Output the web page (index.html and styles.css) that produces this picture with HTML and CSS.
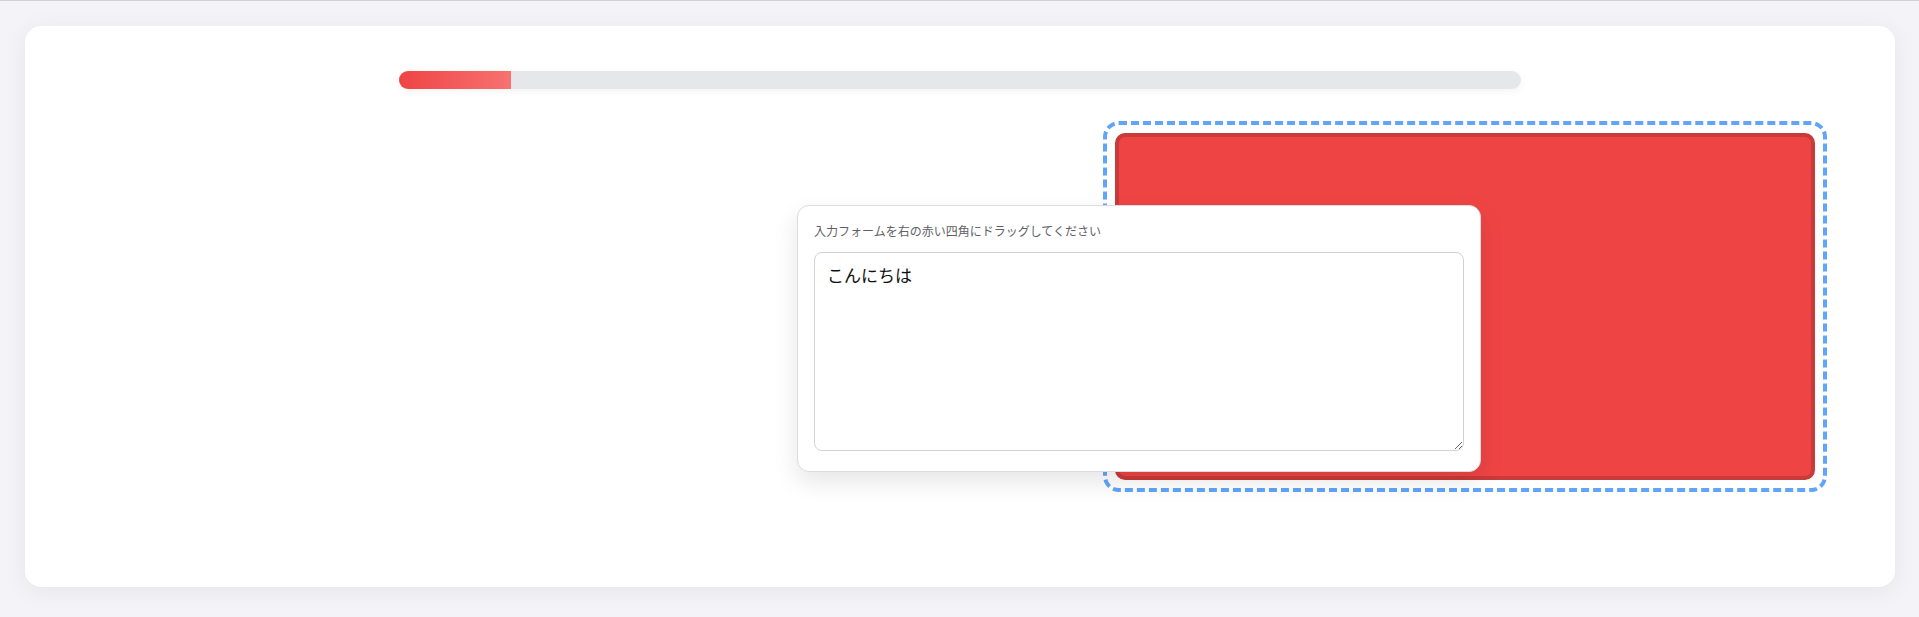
FILE: index.html
```html
<!DOCTYPE html>
<html lang="ja">
<head>
<meta charset="utf-8">
<title>Drag</title>
<link rel="stylesheet" href="styles.css">
</head>
<body>
<div class="card">
  <div class="progress"><div class="progress-fill" style="width:10%"></div></div>
  <div class="stage">
    <div class="dropzone"><div class="target"></div></div>
  </div>
  <div class="panel">
    <div class="panel-label">入力フォームを右の赤い四角にドラッグしてください</div>
    <textarea class="panel-input">こんにちは</textarea>
  </div>
</div>
</body>
</html>
```
FILE: styles.css
```css
html, body {
  margin: 0;
  padding: 0;
}
body {
  background: #f4f4f8;
  border-top: 1px solid #cfcfd4;
  padding: 25px 24px 30px 25px;
  font-family: "Noto Sans CJK JP", "Noto Sans", sans-serif;
  box-sizing: border-box;
  height: 617px;
  overflow: hidden;
}
.card {
  position: relative;
  background: #ffffff;
  border-radius: 16px;
  height: 561px;
  box-sizing: border-box;
  padding: 45px 0 0 0;
  box-shadow: 0 4px 22px rgba(40, 40, 80, 0.08);
}
.progress {
  width: 60%;
  height: 18px;
  margin: 0 auto;
  background: #e5e7eb;
  border-radius: 9px;
  overflow: hidden;
  box-shadow: 0 2px 8px rgba(0, 0, 0, 0.05);
}
.progress-fill {
  height: 100%;
  background: linear-gradient(90deg, #ef4444, #f87171);
}
.stage {
  display: flex;
  justify-content: flex-end;
  margin-top: 32px;
  padding-right: 68px;
}
.dropzone {
  width: 724px;
  height: 371px;
  box-sizing: border-box;
  border: 4px dashed #60a5fa;
  border-radius: 16px;
  padding: 8px;
}
.target {
  height: 100%;
  box-sizing: border-box;
  background: #ef4444;
  border: 4px solid #c93a3a;
  border-radius: 10px;
}
.panel {
  position: absolute;
  left: 772px;
  top: 179px;
  width: 684px;
  box-sizing: border-box;
  background: #ffffff;
  border: 1px solid #dcdce2;
  border-radius: 12px;
  padding: 16px 16px 20px;
  box-shadow: 0 10px 25px rgba(0, 0, 0, 0.1);
}
.panel-label {
  font-size: 12px;
  line-height: 18px;
  color: #5f5f66;
  margin-bottom: 12px;
}
.panel-input {
  display: block;
  width: 100%;
  height: 199px;
  box-sizing: border-box;
  border: 1px solid #d1d1d8;
  border-radius: 8px;
  padding: 10px 12px;
  font-family: "Noto Sans CJK JP", "Noto Sans", sans-serif;
  font-size: 17px;
  line-height: 24px;
  color: #111111;
  background: #ffffff;
  resize: both;
  outline: none;
}
```
